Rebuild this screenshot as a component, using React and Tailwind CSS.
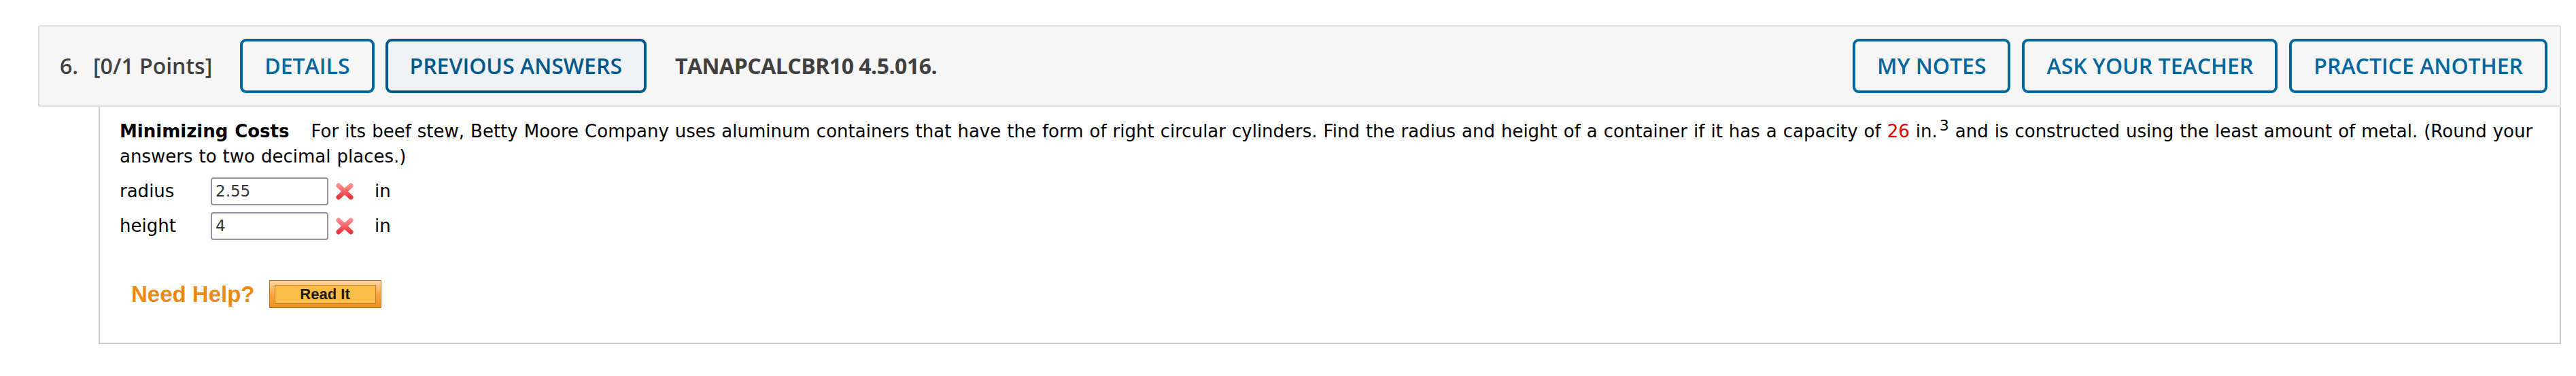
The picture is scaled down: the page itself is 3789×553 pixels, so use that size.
import React from "react";

const HEADER_FONT = { fontFamily: '"Open Sans", "Liberation Sans", sans-serif' };
const BODY_FONT = { fontFamily: '"DejaVu Sans", Verdana, sans-serif' };
const HELP_FONT = { fontFamily: '"Liberation Sans", Arial, sans-serif' };

function HeaderButton({ children, active }) {
  return (
    <button
      className={
        active
          ? "h-[80px] px-[32px] flex items-center border-[4px] border-[#00588a] rounded-[9px] bg-[#eef2f5] text-[#00588a] text-[32px] font-semibold leading-none"
          : "h-[80px] px-[32px] flex items-center border-[4px] border-[#00669e] rounded-[9px] bg-[#f6f6f6] text-[#00669e] text-[32px] font-semibold leading-none"
      }
    >
      {children}
    </button>
  );
}

function WrongMark() {
  return (
    <svg width="28" height="25" viewBox="0 0 28 25" className="shrink-0">
      <defs>
        <linearGradient id="xg" x1="0" y1="0" x2="0" y2="1">
          <stop offset="0" stopColor="#ff8a8a" />
          <stop offset="1" stopColor="#e8383f" />
        </linearGradient>
      </defs>
      <path
        d="M5 4 L23 21 M23 4 L5 21"
        stroke="url(#xg)"
        strokeWidth="7"
        strokeLinecap="round"
        fill="none"
      />
    </svg>
  );
}

function AnswerRow({ label, value, className = "" }) {
  return (
    <div className={"flex items-center h-[41px] " + className}>
      <span className="w-[134px] text-[26px]">{label}</span>
      <div className="w-[173px] h-[41px] border-2 border-[#8f8f9d] rounded-[4px] bg-white flex items-center pl-[5px] text-[23px] text-[#333]">
        {value}
      </div>
      <div className="ml-[10px]">
        <WrongMark />
      </div>
      <span className="ml-[30px] text-[26px]">in</span>
    </div>
  );
}

export default function App() {
  return (
    <div className="w-[3789px] h-[553px] bg-white pt-[37px] pl-[56px]">
      <div className="w-[3711px]">
        {/* ================= HEADER ================= */}
        <div
          className="h-[120px] flex items-center border-2 border-[#dddddd] rounded-[3px] bg-[#f6f6f6] pl-[30px] pr-[18px] text-[#404040]"
          style={HEADER_FONT}
        >
          <span className="text-[32px] font-semibold">6.</span>
          <span className="text-[32px] font-semibold ml-[22px]">[0/1 Points]</span>
          <div className="ml-[41px] flex gap-[16px]">
            <HeaderButton>DETAILS</HeaderButton>
            <HeaderButton active>PREVIOUS ANSWERS</HeaderButton>
          </div>
          <span className="ml-[42px] text-[32px] font-bold tracking-[-0.5px]">
            TANAPCALCBR10 4.5.016.
          </span>
          <div className="ml-auto flex gap-[17px]">
            <HeaderButton>MY NOTES</HeaderButton>
            <HeaderButton>ASK YOUR TEACHER</HeaderButton>
            <HeaderButton>PRACTICE ANOTHER</HeaderButton>
          </div>
        </div>

        {/* ================= QUESTION ================= */}
        <div
          className="ml-[89px] border-x-2 border-b-2 border-[#cccccc] pl-[29px] pr-[29px] pt-[18px] pb-[51px] text-black"
          style={BODY_FONT}
        >
          <p className="text-[26px] leading-[37px] [word-spacing:0.75px]">
            <span className="font-bold mr-[32px]">Minimizing Costs</span>
            For its beef stew, Betty Moore Company uses aluminum containers that have the form of right circular
            cylinders. Find the radius and height of a container if it has a capacity of{" "}
            <span className="text-[#dd0000]">26</span> in.
            <sup className="text-[22px] -top-[10px] ml-[3px]">3</sup> and is constructed using the least amount of
            metal. (Round your answers to two decimal places.)
          </p>

          <AnswerRow label="radius" value="2.55" className="mt-[12px]" />
          <AnswerRow label="height" value="4" className="mt-[10px]" />

          <div className="mt-[59px] ml-[17px] flex items-center gap-[21px]" style={HELP_FONT}>
            <span className="text-[33px] font-bold text-[#ec8a10] leading-none">Need Help?</span>
            <button className="w-[165px] h-[41px] border border-[#b0702c] bg-gradient-to-b from-[#fcd7a0] via-[#f7a53a] to-[#f39024] flex items-center justify-center">
              <span className="w-[149px] h-[28px] border border-[#b7823f] bg-[#fcbd46] flex items-center justify-center text-[22px] font-bold text-[#1a1a1a] leading-none">
                Read It
              </span>
            </button>
          </div>
        </div>
      </div>
    </div>
  );
}
